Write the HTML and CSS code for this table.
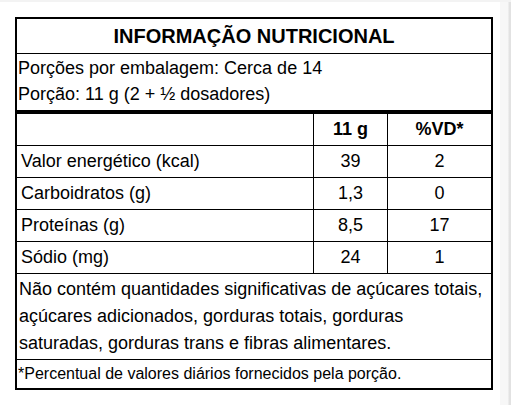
FILE: index.html
```html
<!DOCTYPE html>
<html>
<head>
  <meta charset="UTF-8">
  <title>Informação Nutricional</title>
  <link rel="stylesheet" href="styles.css">
</head>
<body>
  <div class="page">
    <div class="content">
      <div class="label">
        <div class="title">INFORMAÇÃO NUTRICIONAL</div>

        <!-- porções -->
        <div class="portion">
          <div>Porções por embalagem: Cerca de 14</div>
          <div>Porção: 11 g (2 + ½ dosadores)</div>
        </div>

        <!-- tabela de nutrientes -->
        <div class="row head">
          <div class="cell"></div>
          <div class="cell num">11 g</div>
          <div class="cell num">%VD*</div>
        </div>
        <div class="row">
          <div class="cell">Valor energético (kcal)</div>
          <div class="cell num">39</div>
          <div class="cell num">2</div>
        </div>
        <div class="row">
          <div class="cell">Carboidratos (g)</div>
          <div class="cell num">1,3</div>
          <div class="cell num">0</div>
        </div>
        <div class="row">
          <div class="cell">Proteínas (g)</div>
          <div class="cell num">8,5</div>
          <div class="cell num">17</div>
        </div>
        <div class="row">
          <div class="cell">Sódio (mg)</div>
          <div class="cell num">24</div>
          <div class="cell num">1</div>
        </div>

        <div class="note">
          Não contém quantidades significativas de açúcares totais,<br>
          açúcares adicionados, gorduras totais, gorduras<br>
          saturadas, gorduras trans e fibras alimentares.
        </div>
        <div class="footnote">*Percentual de valores diários fornecidos pela porção.</div>
      </div>
    </div>
    <div class="scroll"></div>
  </div>
</body>
</html>
```

FILE: styles.css
```css
html, body {
  margin: 0;
  padding: 0;
  background: #fff;
}
body {
  font-family: "Liberation Sans", Arial, sans-serif;
  color: #000;
}
.page {
  display: flex;
  height: 405px;
  border-top: 2px solid #f3f3f3;
  box-sizing: border-box;
}
.content {
  flex: 1;
  padding: 15px 0 0 15px;
}
.scroll {
  width: 11px;
  background: linear-gradient(to right, #f7f7f7 0, #f7f7f7 8px, #e2e2e2 9px, #e2e2e2 11px);
}
.label {
  width: 478px;
  border: 2px solid #000;
  box-sizing: border-box;
}
.title {
  height: 35px;
  line-height: 34px;
  border-bottom: 1px solid #000;
  box-sizing: border-box;
  text-align: center;
  font-weight: bold;
  font-size: 20px;
}
.portion {
  height: 60px;
  padding: 1px 0 0 1px;
  font-size: 18px;
  line-height: 26px;
  border-bottom: 4px solid #000;
  box-sizing: border-box;
}
.row {
  display: grid;
  grid-template-columns: 296px 74px 104px;
  height: 32px;
  border-bottom: 1px solid #000;
  box-sizing: border-box;
  font-size: 18px;
  line-height: 31px;
}
.cell {
  padding-left: 4px;
}
.cell + .cell {
  border-left: 1px solid #000;
}
.num {
  padding-left: 0;
  text-align: center;
}
.head {
  font-weight: bold;
}
.note {
  height: 86px;
  padding: 2px 0 0 2px;
  font-size: 18px;
  line-height: 27px;
  border-bottom: 1px solid #000;
  box-sizing: border-box;
}
.footnote {
  height: 28px;
  padding-left: 1px;
  font-size: 16px;
  line-height: 28px;
}
```
